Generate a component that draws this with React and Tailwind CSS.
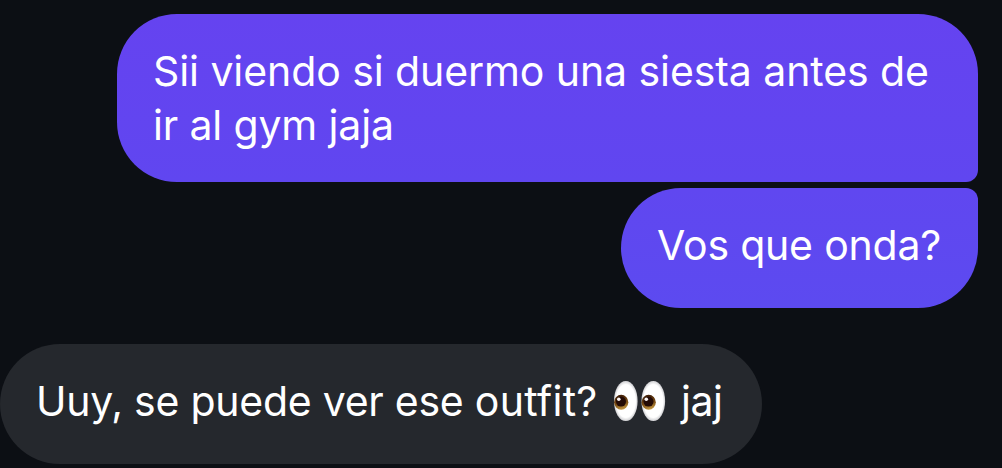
const EYES = [1, 28.5];

const EyesEmoji = () => (
  <svg
    viewBox="0 0 54 42"
    role="img"
    aria-label="👀"
    className="w-[54px] h-[42px] shrink-0"
  >
    <defs>
      <radialGradient id="eyeWhite" cx="0.5" cy="0.5" r="0.5">
        <stop offset="0.82" stopColor="#ffffff" />
        <stop offset="1" stopColor="#cfcfd2" />
      </radialGradient>
      <linearGradient id="iris" x1="0.35" y1="0" x2="0.6" y2="1">
        <stop offset="0" stopColor="#3d1c06" />
        <stop offset="0.55" stopColor="#7a4d14" />
        <stop offset="1" stopColor="#c79b45" />
      </linearGradient>
    </defs>
    {EYES.map((x) => (
      <g key={x} transform={`translate(${x} 1)`}>
        <ellipse cx="11.8" cy="20" rx="11.8" ry="20" fill="url(#eyeWhite)" />
        <ellipse cx="7.2" cy="21.3" rx="7.1" ry="7.5" fill="url(#iris)" />
        <circle cx="7" cy="20.6" r="5" fill="#240b05" />
        <circle cx="4.8" cy="18.2" r="1.8" fill="#fbf6f4" />
      </g>
    ))}
  </svg>
);

const Bubble = ({ className, children }) => (
  <div className={`px-9 pt-[30px] text-[41px] leading-[54px] whitespace-nowrap ${className}`}>
    {children}
  </div>
);

const App = () => {
  return (
    <div className="w-full h-[468px] overflow-hidden bg-[#0c0f14] pt-3.5 font-['Inter',sans-serif] text-white">
      {/* Sent messages */}
      <div className="flex flex-col items-end gap-1.5 pr-6">
        <Bubble className="w-[861px] h-[168px] rounded-[60px] rounded-br-xl bg-linear-to-b from-[#6543f0] to-[#6046f0]">
          <p className="tracking-[-0.08px]">Sii viendo si duermo una siesta antes de</p>
          <p className="tracking-[-0.15px]">ir al gym jaja</p>
        </Bubble>
        <Bubble className="w-[357px] h-[120px] rounded-[60px] rounded-tr-xl bg-linear-to-b from-[#6047f0] to-[#5c4af0]">
          <p className="tracking-[-0.2px]">Vos que onda?</p>
        </Bubble>
      </div>

      {/* Received message */}
      <div className="mt-9 flex">
        <Bubble className="flex w-[762px] h-[120px] rounded-[60px] bg-[#25282d]">
          <p className="w-[577px] tracking-[-0.25px]">
            Uuy, se puede ver ese <span className="tracking-[0.3px]">outfit?</span>
          </p>
          <span className="flex h-[54px] items-center">
            <EyesEmoji />
          </span>
          <p className="ml-3.5 tracking-[-0.5px]">jaj</p>
        </Bubble>
      </div>
    </div>
  );
};

export default App;
